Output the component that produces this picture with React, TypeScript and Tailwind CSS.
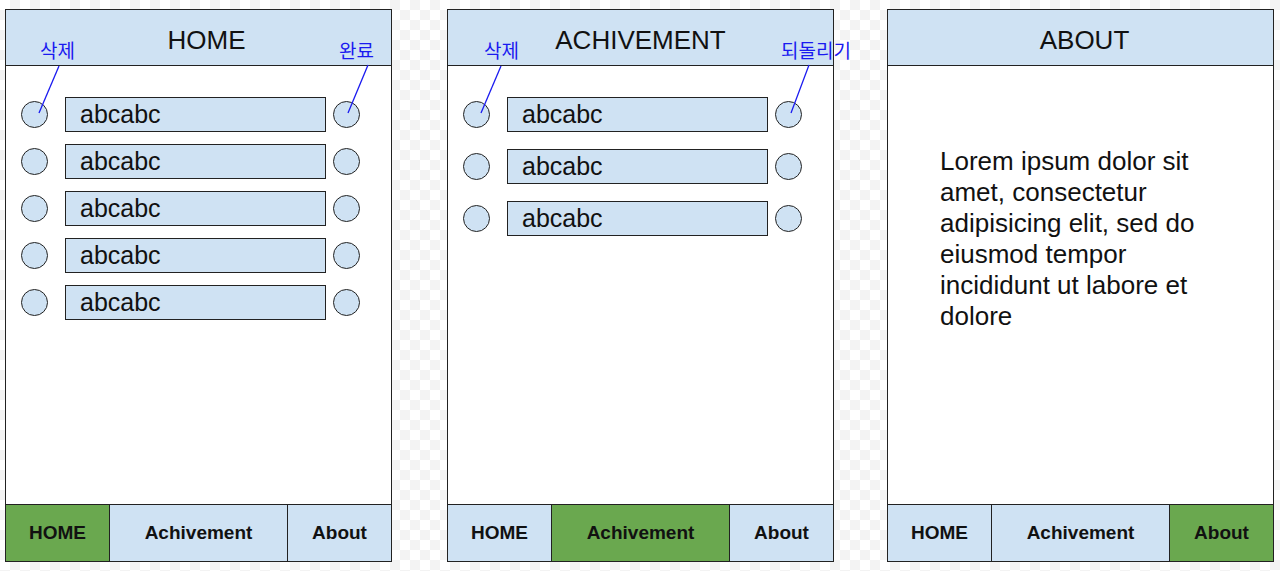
import React from "react";

const font = "font-['Liberation_Sans','Noto_Sans_CJK_KR',sans-serif]";

type Tab = "HOME" | "Achivement" | "About";

const NavBar = ({ active }: { active: Tab }) => {
  const cell = (name: Tab, w: string, last = false) => (
    <div
      className={`${w} h-full flex items-center justify-center text-[19px] font-bold text-[#111] ${
        last ? "" : "border-r border-[#222]"
      } ${active === name ? "bg-[#6aa84f]" : "bg-[#cfe2f3]"}`}
    >
      {name}
    </div>
  );
  return (
    <div className="h-[57px] border-t border-[#222] flex shrink-0">
      {cell("HOME", "w-[104px]")}
      {cell("Achivement", "w-[178px]")}
      {cell("About", "flex-1", true)}
    </div>
  );
};

const Header = ({ title, shift = "" }: { title: string; shift?: string }) => (
  <div
    className={`h-[56px] shrink-0 border-b border-[#222] bg-[#cfe2f3] flex justify-center pt-[15px] text-[26px] leading-[30px] text-[#111] ${shift}`}
  >
    {title}
  </div>
);

const Circle = () => <div className="w-[27px] h-[27px] rounded-full border border-[#222] bg-[#cfe2f3] shrink-0" />;

const Row = () => (
  <div className="flex items-center pl-[15px]">
    <Circle />
    <div className="ml-[17px] w-[261px] h-[35px] border border-[#222] bg-[#cfe2f3] pl-[14px] flex items-center text-[25px] text-[#111]">
      abcabc
    </div>
    <div className="ml-[7px]">
      <Circle />
    </div>
  </div>
);

const Label = ({ text, className }: { text: string; className: string }) => (
  <span className={`absolute top-[31px] text-[19px] leading-[22px] text-[#1a1af0] whitespace-nowrap ${className}`}>{text}</span>
);

const Lines = ({ lines }: { lines: [number, number, number, number][] }) => (
  <svg className="absolute left-0 top-0 pointer-events-none overflow-visible" width="387" height="120">
    {lines.map(([x1, y1, x2, y2], i) => (
      <line key={i} x1={x1} y1={y1} x2={x2} y2={y2} stroke="#1a1af0" strokeWidth="1.3" />
    ))}
  </svg>
);

const Panel = ({ children, className = "" }: { children: React.ReactNode; className?: string }) => (
  <div className={`relative w-[387px] h-[553px] shrink-0 border border-[#222] bg-white flex flex-col ${className}`}>
    {children}
  </div>
);

export default function App() {
  return (
    <div
      className={`${font} w-[1280px] h-[571px] bg-[repeating-conic-gradient(#f3f3f3_0_25%,#ffffff_0_50%)] bg-[length:20px_20px] flex pl-[5px] pt-[9px]`}
    >
      <Panel>
        <Header title="HOME" shift="pl-[16px]" />
        <div className="flex-1 flex flex-col gap-[12px] pt-[31px]">
          {[0, 1, 2, 3, 4].map((i) => (
            <Row key={i} />
          ))}
        </div>
        <NavBar active="HOME" />
        <Label text="삭제" className="left-[34px]" />
        <Label text="완료" className="left-[333px]" />
        <Lines lines={[[53, 56, 33, 103], [362, 55, 342, 103]]} />
      </Panel>

      <Panel className="ml-[55px]">
        <Header title="ACHIVEMENT" />
        <div className="flex-1 flex flex-col gap-[17px] pt-[31px]">
          {[0, 1, 2].map((i) => (
            <Row key={i} />
          ))}
        </div>
        <NavBar active="Achivement" />
        <Label text="삭제" className="left-[36px]" />
        <Label text="되돌리기" className="left-[333px]" />
        <Lines lines={[[53, 56, 33, 103], [361, 55, 343, 103]]} />
      </Panel>

      <Panel className="ml-[53px]">
        <Header title="ABOUT" shift="pl-[8px]" />
        <div className="flex-1 pt-[80px] pl-[52px]">
          <p className="w-[290px] text-[26px] leading-[31px] text-[#111]">
            Lorem ipsum dolor sit amet, consectetur adipisicing elit, sed do eiusmod tempor incididunt ut labore et dolore
          </p>
        </div>
        <NavBar active="About" />
      </Panel>
    </div>
  );
}
